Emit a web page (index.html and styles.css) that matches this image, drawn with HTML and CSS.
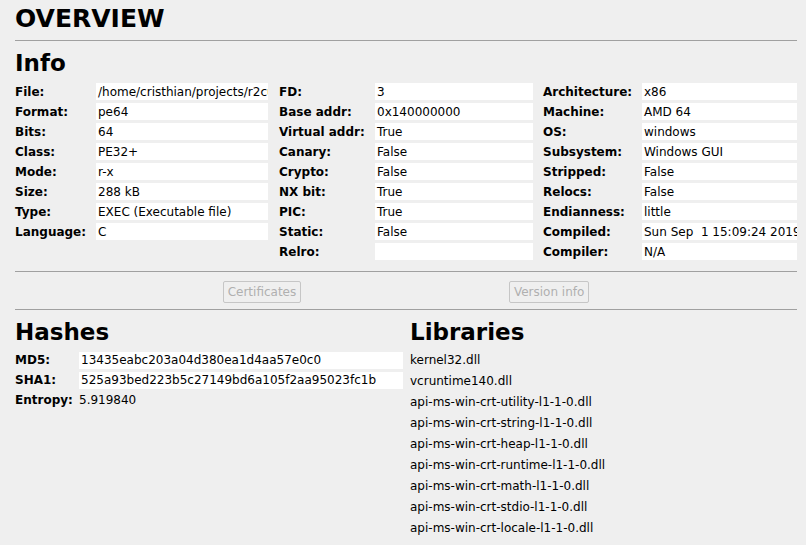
FILE: index.html
```html
<!DOCTYPE html>
<html>
<head>
<meta charset="utf-8">
<link rel="stylesheet" href="styles.css">
</head>
<body>
<div class="page">
  <h1 class="title">OVERVIEW</h1>
  <div class="hr hr-top"></div>
  <h2 class="section info-head">Info</h2>
  <div class="info">
    <div class="col col1">
      <div class="lbl">File:</div><div class="val">/home/cristhian/projects/r2cutter/build/sample.exe</div>
      <div class="lbl">Format:</div><div class="val">pe64</div>
      <div class="lbl">Bits:</div><div class="val">64</div>
      <div class="lbl">Class:</div><div class="val">PE32+</div>
      <div class="lbl">Mode:</div><div class="val">r-x</div>
      <div class="lbl">Size:</div><div class="val">288 kB</div>
      <div class="lbl">Type:</div><div class="val">EXEC (Executable file)</div>
      <div class="lbl">Language:</div><div class="val">C</div>
    </div>
    <div class="col col2">
      <div class="lbl">FD:</div><div class="val">3</div>
      <div class="lbl">Base addr:</div><div class="val">0x140000000</div>
      <div class="lbl">Virtual addr:</div><div class="val">True</div>
      <div class="lbl">Canary:</div><div class="val">False</div>
      <div class="lbl">Crypto:</div><div class="val">False</div>
      <div class="lbl">NX bit:</div><div class="val">True</div>
      <div class="lbl">PIC:</div><div class="val">True</div>
      <div class="lbl">Static:</div><div class="val">False</div>
      <div class="lbl">Relro:</div><div class="val"></div>
    </div>
    <div class="col col3">
      <div class="lbl">Architecture:</div><div class="val">x86</div>
      <div class="lbl">Machine:</div><div class="val">AMD 64</div>
      <div class="lbl">OS:</div><div class="val">windows</div>
      <div class="lbl">Subsystem:</div><div class="val">Windows GUI</div>
      <div class="lbl">Stripped:</div><div class="val">False</div>
      <div class="lbl">Relocs:</div><div class="val">False</div>
      <div class="lbl">Endianness:</div><div class="val">little</div>
      <div class="lbl">Compiled:</div><div class="val">Sun Sep  1 15:09:24 2019</div>
      <div class="lbl">Compiler:</div><div class="val">N/A</div>
    </div>
  </div>
  <div class="hr hr-mid"></div>
  <div class="buttons">
    <button class="btn" disabled>Certificates</button>
    <button class="btn" disabled>Version info</button>
  </div>
  <div class="hr hr-low"></div>
  <div class="bottom">
    <div class="hashes">
      <h2 class="section">Hashes</h2>
      <div class="hash-grid">
        <div class="lbl">MD5:</div><div class="val">13435eabc203a04d380ea1d4aa57e0c0</div>
        <div class="lbl">SHA1:</div><div class="val">525a93bed223b5c27149bd6a105f2aa95023fc1b</div>
        <div class="lbl plain">Entropy:</div><div class="plainval">5.919840</div>
      </div>
    </div>
    <div class="libraries">
      <h2 class="section">Libraries</h2>
      <ul class="lib-list">
        <li>kernel32.dll</li>
        <li>vcruntime140.dll</li>
        <li>api-ms-win-crt-utility-l1-1-0.dll</li>
        <li>api-ms-win-crt-string-l1-1-0.dll</li>
        <li>api-ms-win-crt-heap-l1-1-0.dll</li>
        <li>api-ms-win-crt-runtime-l1-1-0.dll</li>
        <li>api-ms-win-crt-math-l1-1-0.dll</li>
        <li>api-ms-win-crt-stdio-l1-1-0.dll</li>
        <li>api-ms-win-crt-locale-l1-1-0.dll</li>
      </ul>
    </div>
  </div>
</div>
</body>
</html>
```
FILE: styles.css
```css
html, body {
  margin: 0;
  padding: 0;
  background: #efefef;
}
body {
  width: 806px;
  height: 545px;
  overflow: hidden;
  font-family: "DejaVu Sans", "Liberation Sans", sans-serif;
  font-size: 12px;
  color: #000;
}
.page {
  padding: 4px 9px 0 15px;
}
.title {
  margin: 0;
  font-size: 25px;
  line-height: 30px;
  font-weight: bold;
}
.hr {
  height: 1px;
  background: #a0a0a0;
}
.hr-top { margin-top: 6px; }
.section {
  margin: 9px 0 0 0;
  font-size: 23px;
  line-height: 26px;
  font-weight: bold;
}
.info {
  margin-top: 7px;
  display: grid;
  grid-template-columns: 253px 254px 254px;
  column-gap: 11px;
}
.col {
  display: grid;
  grid-auto-rows: 17px;
  row-gap: 3px;
  align-content: start;
}
.col1 { grid-template-columns: 81px 172px; }
.col2 { grid-template-columns: 96px 158px; }
.col3 { grid-template-columns: 99px 155px; margin-left: -1px; }
.lbl {
  font-weight: bold;
  line-height: 16px;
  padding-top: 1px;
  white-space: nowrap;
}
.val {
  background: #fff;
  line-height: 16px;
  padding: 1px 2px 0 2px;
  white-space: pre;
  overflow: hidden;
}
.hr-mid { margin-top: 11px; }
.buttons {
  margin-top: 9px;
  height: 22px;
  display: flex;
  justify-content: space-evenly;
}
.btn {
  font-family: "DejaVu Sans", "Liberation Sans", sans-serif;
  font-size: 12px;
  color: #b0b0b0;
  background: #efefef;
  border: 1px solid #c6c6c6;
  border-radius: 2px;
  padding: 0 4px;
  height: 22px;
  line-height: 20px;
  margin: 0;
}
.hr-low { margin-top: 6px; }
.bottom {
  display: grid;
  grid-template-columns: 388px 1fr;
  column-gap: 7px;
}
.hash-grid {
  margin-top: 7px;
  display: grid;
  grid-template-columns: 64px 324px;
  grid-template-rows: 17px 17px 15px;
  row-gap: 3px;
}
.hash-grid .lbl { line-height: 17px; padding-top: 0; }
.hash-grid .val { line-height: 17px; padding-top: 0; }
.hash-grid .plain { line-height: 14px; padding-top: 1px; }
.plainval { line-height: 14px; padding-top: 1px; }
.lib-list {
  list-style: none;
  margin: 5px 0 0 0;
  padding: 0;
}
.lib-list li {
  line-height: 21px;
  height: 21px;
  white-space: nowrap;
}
```
